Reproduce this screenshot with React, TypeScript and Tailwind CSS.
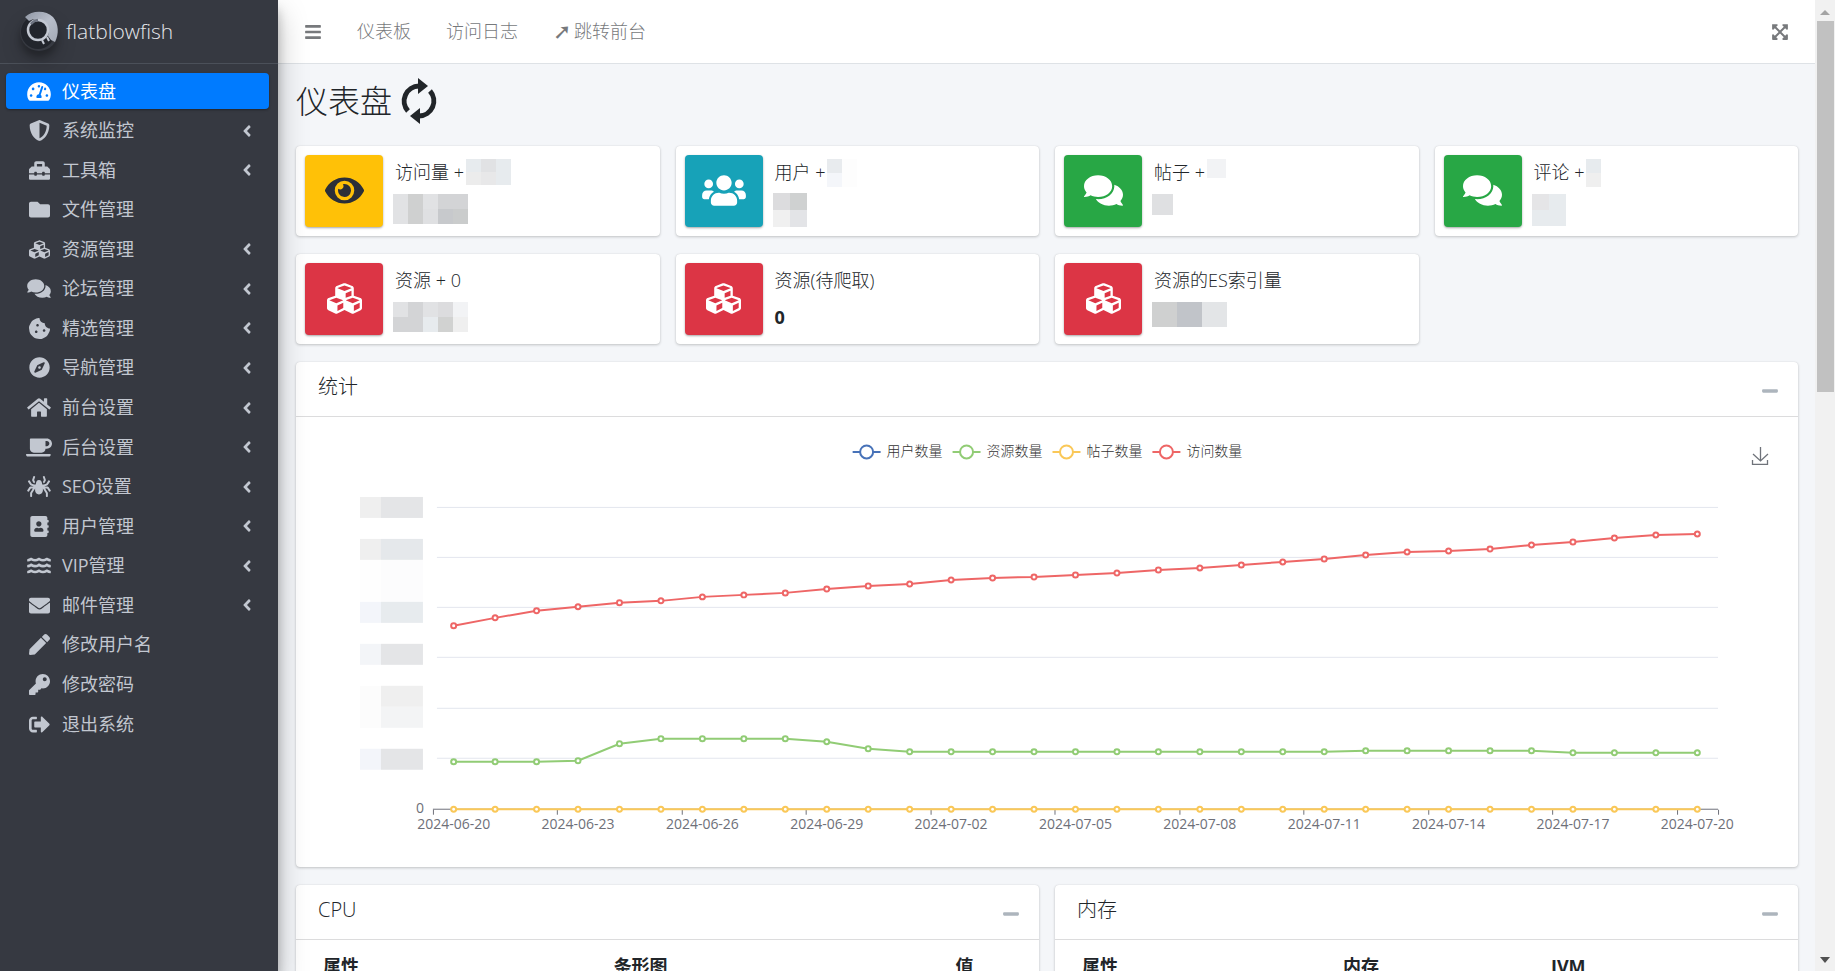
import React from 'react';
import type { IconType } from 'react-icons';
import {
  FaAddressBook,
  FaAngleLeft,
  FaBars,
  FaCoffee,
  FaComments,
  FaCompass,
  FaCookieBite,
  FaCubes,
  FaEnvelope,
  FaExpandArrowsAlt,
  FaEye,
  FaFolder,
  FaHome,
  FaKey,
  FaMinus,
  FaPen,
  FaShieldAlt,
  FaSignOutAlt,
  FaSpider,
  FaTachometerAlt,
  FaToolbox,
  FaUsers,
  FaWater,
} from 'react-icons/fa';

interface MenuItem {
  label: string;
  icon: IconType;
  size?: string;
  active?: boolean;
  children?: boolean;
}

const menu: MenuItem[] = [
  { label: '仪表盘', icon: FaTachometerAlt, size: 'h-[21px] w-6', active: true },
  { label: '系统监控', icon: FaShieldAlt, children: true },
  { label: '工具箱', icon: FaToolbox, children: true },
  { label: '文件管理', icon: FaFolder },
  { label: '资源管理', icon: FaCubes, children: true },
  { label: '论坛管理', icon: FaComments, size: 'h-[21px] w-6', children: true },
  { label: '精选管理', icon: FaCookieBite, children: true },
  { label: '导航管理', icon: FaCompass, children: true },
  { label: '前台设置', icon: FaHome, size: 'h-[21px] w-6', children: true },
  { label: '后台设置', icon: FaCoffee, size: 'h-[21px] w-[26px]', children: true },
  { label: 'SEO设置', icon: FaSpider, size: 'h-[21px] w-6', children: true },
  { label: '用户管理', icon: FaAddressBook, children: true },
  { label: 'VIP管理', icon: FaWater, size: 'h-[21px] w-6', children: true },
  { label: '邮件管理', icon: FaEnvelope, children: true },
  { label: '修改用户名', icon: FaPen },
  { label: '修改密码', icon: FaKey },
  { label: '退出系统', icon: FaSignOutAlt },
];

interface Mask {
  cell: string;
  rows: string[][];
}

interface StatCard {
  label: string;
  icon: IconType;
  size: string;
  color: string;
  value?: string;
  // masked numbers are rows of coloured blocks
  delta?: Mask;
  total?: Mask;
}

const stats: StatCard[] = [
  {
    label: '访问量 +',
    icon: FaEye,
    size: 'h-[35px] w-[39px]',
    color: 'bg-[#ffc107] text-[#2b2f38]',
    delta: { cell: 'w-[15px] h-[13px]', rows: [['#e7ebee', '#e1e2e4', '#e7ebee'], ['#ececec', '#e8e8e9', '#e7ebee']] },
    total: {
      cell: 'w-[15px] h-[15px]',
      rows: [
        ['#e1e2e4', '#cfd0d0', '#e1e2e4', '#d3d4d6', '#d3d4d6'],
        ['#e1e2e4', '#cfd0d0', '#dfe0e2', '#c7c9cc', '#cacccc'],
      ],
    },
  },
  {
    label: '用户 +',
    icon: FaUsers,
    size: 'h-[35px] w-11',
    color: 'bg-[#17a2b8] text-white',
    delta: { cell: 'w-[15px] h-[14px]', rows: [['#e8ebee', '#fdfdfd'], ['#f4f6fa', '#fdfdfd']] },
    total: { cell: 'w-[17px] h-[17px]', rows: [['#dcdcde', '#cfd1d1'], ['#f0f0f0', '#e3e4e7']] },
  },
  {
    label: '帖子 +',
    icon: FaComments,
    size: 'h-[35px] w-[39px]',
    color: 'bg-[#28a745] text-white',
    delta: { cell: 'w-[19px] h-[19px]', rows: [['#f2f3f5']] },
    total: { cell: 'w-[21px] h-[21px]', rows: [['#dfe0e2']] },
  },
  {
    label: '评论 +',
    icon: FaComments,
    size: 'h-[35px] w-[39px]',
    color: 'bg-[#28a745] text-white',
    delta: { cell: 'w-[15px] h-[14px]', rows: [['#e7ebee'], ['#efefef']] },
    total: { cell: 'w-[17px] h-[16px]', rows: [['#e5e5e7', '#e7ebee'], ['#e7ebee', '#e7ebee']] },
  },
  {
    label: '资源 + 0',
    icon: FaCubes,
    size: 'h-[35px] w-[35px]',
    color: 'bg-[#dc3545] text-white',
    total: {
      cell: 'w-[15px] h-[15px]',
      rows: [
        ['#e1e2e4', '#d3d4d6', '#e1e2e4', '#dcdcde', '#f2f3f5'],
        ['#d3d4d6', '#d3d4d6', '#e7ebee', '#d1d2d1', '#efefef'],
      ],
    },
  },
  { label: '资源(待爬取)', icon: FaCubes, size: 'h-[35px] w-[35px]', color: 'bg-[#dc3545] text-white', value: '0' },
  {
    label: '资源的ES索引量',
    icon: FaCubes,
    size: 'h-[35px] w-[35px]',
    color: 'bg-[#dc3545] text-white',
    total: { cell: 'w-[25px] h-[25px]', rows: [['#cfd0d0', '#c1c4c9', '#e3e5e7']] },
  },
];

const MaskBlock: React.FC<{ mask: Mask }> = ({ mask }) => (
  <span className="flex flex-col" aria-hidden="true">
    {mask.rows.map((row, i) => (
      <span key={i} className="flex">
        {row.map((color, j) => (
          <span key={j} className={mask.cell} style={{ backgroundColor: color }} />
        ))}
      </span>
    ))}
  </span>
);

const Logo: React.FC = () => (
  <svg
    width="38"
    height="38"
    viewBox="0 0 38 38"
    className="overflow-visible rounded-full shadow-[0_10px_20px_rgba(0,0,0,0.19),0_6px_6px_rgba(0,0,0,0.23)]"
  >
    <defs>
      <linearGradient id="rim" x1="0" y1="0" x2="1" y2="1">
        <stop offset="0" stopColor="#8f96a4" />
        <stop offset="0.5" stopColor="#b9bfcb" />
        <stop offset="1" stopColor="#a3a9b5" />
      </linearGradient>
    </defs>
    <circle cx="18" cy="19" r="17" fill="#22252c" />
    <path d="M5 4C12-3 26-3 33 4c6 7 6 17 2 25l-4-2-3-4A13 13 0 0 0 9 8z" fill="url(#rim)" />
    <circle cx="18" cy="17" r="10" fill="#22252c" stroke="#c3c8d2" strokeWidth="2.5" />
    <path d="M11 11a10 10 0 0 1 7-4" stroke="#6d7380" strokeWidth="2.500" fill="none" />
    <path d="M22 27l2 4M27 24l2 4" stroke="#c3c8d2" strokeWidth="2" />
  </svg>
);

const Sidebar: React.FC = () => (
  <aside className="relative z-20 w-[278px] shrink-0 bg-[#363941] text-[#c2c7d0] shadow-[0_14px_28px_rgba(0,0,0,0.25),0_10px_10px_rgba(0,0,0,0.22)]">
    <a href="#" className="flex h-16 items-center gap-2 border-b border-[#4b5059] pl-5 text-[21px]">
      <Logo />
      <span className="font-light text-[#e4e6ea]">flatblowfish</span>
    </a>
    <nav className="px-[6px] pt-[9px]">
      <ul className="flex h-[669px] flex-col justify-between">
        {menu.map(({ label, icon: Icon, size, active, children }) => (
          <li key={label}>
            <a
              href="#"
              className={
                active
                  ? 'mr-[3px] flex h-9 items-center rounded bg-[#007bff] pl-[19px] text-white shadow-[0_1px_3px_rgba(0,0,0,0.12),0_1px_2px_rgba(0,0,0,0.24)]'
                  : 'mr-[3px] flex h-9 items-center rounded pl-[19px]'
              }
            >
              <span className="flex w-7 justify-center">
                <Icon className={size ?? 'h-[21px] w-[21px]'} />
              </span>
              <span className="ml-[9px] flex-1">{label}</span>
              {children && <FaAngleLeft className="mr-[13px] h-[18px] w-[18px]" />}
            </a>
          </li>
        ))}
      </ul>
    </nav>
  </aside>
);

const TopBar: React.FC = () => (
  <header className="flex h-16 shrink-0 items-center border-b border-[#dee2e6] bg-white px-[27px] text-[#77797c]">
    <button type="button" aria-label="菜单" className="mr-9">
      <FaBars className="h-[18px] w-[16px]" />
    </button>
    <nav className="flex flex-1 items-center gap-[35px] font-light">
      <a href="#">仪表板</a>
      <a href="#">访问日志</a>
      <a href="#" className="flex items-center gap-[3px]">
        <span className="font-['DejaVu_Sans'] text-[22px]">➚</span>
        <span>跳转前台</span>
      </a>
    </nav>
    <button type="button" aria-label="全屏">
      <FaExpandArrowsAlt className="h-[18px] w-[16px]" />
    </button>
  </header>
);

const InfoBox: React.FC<{ stat: StatCard }> = ({ stat }) => {
  const Icon = stat.icon;
  return (
    <div className="flex h-[90px] rounded-[4px] bg-white p-[9px] shadow-[0_0_1px_rgba(0,0,0,0.125),0_1px_3px_rgba(0,0,0,0.2)]">
      <span
        className={`flex w-[78px] shrink-0 items-center justify-center rounded pb-[2px] shadow-[0_1px_3px_rgba(0,0,0,0.12),0_1px_2px_rgba(0,0,0,0.24)] ${stat.color}`}
      >
        <Icon className={stat.size} />
      </span>
      <div className="flex flex-1 flex-col gap-[5px] pl-[10px]">
        <div className="flex h-[34px] items-start gap-[2px] pt-1 pl-[2px]">
          <span className="leading-[26px]">{stat.label}</span>
          {stat.delta && <MaskBlock mask={stat.delta} />}
        </div>
        <div className="flex items-start">
          {stat.total && <MaskBlock mask={stat.total} />}
          {stat.value && <span className="pl-[2px] leading-[30px] font-bold">{stat.value}</span>}
        </div>
      </div>
    </div>
  );
};

const Card: React.FC<{ title: string; children: React.ReactNode }> = ({ title, children }) => (
  <section className="rounded-[4px] bg-white shadow-[0_0_1px_rgba(0,0,0,0.125),0_1px_3px_rgba(0,0,0,0.2)]">
    <div className="flex h-[55px] items-start justify-between border-b border-[#dcdcdd] pt-3 pr-5 pl-[22px]">
      <h3 className="text-xl leading-[26px]">{title}</h3>
      <button type="button" aria-label="折叠" className="mt-2 text-[#adb5bd]">
        <FaMinus className="h-[18px] w-[16px]" />
      </button>
    </div>
    {children}
  </section>
);

const LEFT = 137;
const BAND = 1286 / 31;
const BASE = 392.5;
const pointX = (i: number) => LEFT + BAND * (i + 0.5);

const visits = [
  209, 201, 194, 190, 186, 184, 180, 178, 176, 172, 169, 167, 163, 161, 160, 158, 156, 153, 151, 148, 145, 142, 138,
  135, 134, 132, 128, 125, 121, 118, 117,
];
const resources = [
  345, 345, 345, 344, 327, 322, 322, 322, 322, 325, 332, 335, 335, 335, 335, 335, 335, 335, 335, 335, 335, 335, 334,
  334, 334, 334, 334, 336, 336, 336, 336,
];
const zeros = visits.map(() => BASE);

const dates = [
  '2024-06-20', '2024-06-23', '2024-06-26', '2024-06-29', '2024-07-02', '2024-07-05',
  '2024-07-08', '2024-07-11', '2024-07-14', '2024-07-17', '2024-07-20',
];

const legend = [
  { name: '用户数量', color: '#4772b8' },
  { name: '资源数量', color: '#91cc75' },
  { name: '帖子数量', color: '#fac858' },
  { name: '访问数量', color: '#ee6666' },
];

// y, height, left colour, right colour
const maskedTicks: [number, number, string, string][] = [
  [80, 21, '#efefef', '#e4e5e7'],
  [122, 21, '#efefef', '#e5e8eb'],
  [143, 42, '#fefefe', '#fcfcfd'],
  [185, 21, '#f3f5fa', '#e7ebee'],
  [227, 21, '#f3f5f8', '#e4e5e7'],
  [269, 21, '#fcfcfc', '#efefef'],
  [290, 21, '#fcfcfc', '#f3f4f5'],
  [332, 21, '#f3f5fa', '#e4e5e7'],
];

const Series: React.FC<{ values: number[]; color: string }> = ({ values, color }) => (
  <g stroke={color} strokeWidth="2">
    <polyline points={values.map((y, i) => `${pointX(i)},${y}`).join(' ')} fill="none" />
    {values.map((y, i) => (
      <circle key={i} cx={pointX(i)} cy={y} r="2.5" fill="#fff" />
    ))}
  </g>
);

const Chart: React.FC = () => (
  <svg viewBox="0 0 1503 450" className="block w-full" role="img" aria-label="统计">
    {legend.map((item, i) => (
      <g key={item.name}>
        <path d={`M${557 + i * 100} 35h28`} stroke={item.color} strokeWidth="2" />
        <circle cx={571 + i * 100} cy="35" r="6.5" fill="#fff" stroke={item.color} strokeWidth="2" />
        <text x={591 + i * 100} y="39" fontSize="14" fill="#333">
          {item.name}
        </text>
      </g>
    ))}

    <g stroke="#6f737a" strokeWidth="1.3" fill="none">
      <path d="M1465.5 30v14M1458 37l7.5 7 7.5-7M1457.5 43v4.500h15v-4.500" />
    </g>

    {[90, 140, 190, 240, 291, 341].map(y => (
      <path key={y} d={`M141 ${y + 0.5}H1423`} stroke="#e3e6ee" />
    ))}
    {maskedTicks.map(([y, h, a, b]) => (
      <g key={y}>
        <rect x="64" y={y} width="21" height={h} fill={a} />
        <rect x="85" y={y} width="42" height={h} fill={b} />
      </g>
    ))}

    <path d="M137 392.500H1423" stroke="#6e7079" />
    {[0, 3, 6, 9, 12, 15, 18, 21, 24, 27, 30, 31].map(n => (
      <path key={n} d={`M${Math.round(LEFT + n * BAND) + 0.5} 393v5`} stroke="#6e7079" />
    ))}
    <g fontSize="14" fill="#6e7079" className="font-normal">
      <text x="128" y="396" textAnchor="end">0</text>
      {dates.map((d, i) => (
        <text key={d} x={pointX(i * 3)} y="412" textAnchor="middle">
          {d}
        </text>
      ))}
    </g>

    <Series values={resources} color="#91cc75" />
    <Series values={zeros} color="#fac858" />
    <Series values={visits} color="#ee6666" />
  </svg>
);

const Scrollbar: React.FC = () => (
  <div className="flex w-5 shrink-0 flex-col items-center bg-[#f1f1f1] py-2" aria-hidden="true">
    <svg width="10" height="6" viewBox="0 0 10 6" className="my-[1px]">
      <path d="M0 6l5-5 5 5z" fill="#a3a3a3" />
    </svg>
    <div className="mt-[5px] h-[371px] w-[17px] bg-[#c1c1c1]" />
    <svg width="10" height="6" viewBox="0 0 10 6" className="mt-auto">
      <path d="M0 0l5 6 5-6z" fill="#505050" />
    </svg>
  </div>
);

const App: React.FC = () => {
  return (
    <div className="flex h-screen overflow-hidden bg-[#f4f6f9] font-['Open_Sans','Noto_Sans_CJK_SC',sans-serif] text-lg leading-[27px] text-[#212529]">
      <Sidebar />
      <div className="flex min-w-0 flex-1 flex-col">
        <TopBar />
        <main className="min-h-0 flex-1 overflow-hidden pr-[17px] pl-[18px] font-light">
          <div className="flex h-[82px] items-center gap-[9px] pb-[9px]">
            <h1 className="text-[32px] leading-[38px]">仪表盘</h1>
            <button type="button" aria-label="刷新">
              <svg width="36" height="46" viewBox="0 0 36 46" fill="none" stroke="#212529" strokeWidth="5">
                <path d="M7 33A15 15 0 0 1 18 8" />
                <path d="M29 13A15 15 0 0 1 18 38" />
                <path d="M17 0l10 8-10 8z" fill="#212529" stroke="none" />
                <path d="M19 46L9 38l10-8z" fill="#212529" stroke="none" />
              </svg>
            </button>
          </div>
          <div className="grid grid-cols-4 gap-x-4 gap-y-[18px]">
            {stats.map(stat => (
              <InfoBox key={stat.label} stat={stat} />
            ))}
          </div>
          <div className="mt-[18px]">
            <Card title="统计">
              <Chart />
            </Card>
          </div>
          <div className="mt-[18px] grid grid-cols-2 gap-4">
            <Card title="CPU">
              <table className="w-full table-fixed text-left">
                <thead>
                  <tr>
                    <th className="w-[41%] py-[13px] pl-[27px]">属性</th>
                    <th className="w-[46%] px-[13px] py-[13px]">条形图</th>
                    <th className="px-[13px] py-[13px]">值</th>
                  </tr>
                </thead>
              </table>
            </Card>
            <Card title="内存">
              <table className="w-full table-fixed text-left">
                <thead>
                  <tr>
                    <th className="w-[37%] py-[13px] pl-[27px]">属性</th>
                    <th className="w-[28%] px-[13px] py-[13px]">内存</th>
                    <th className="px-[13px] py-[13px]">JVM</th>
                  </tr>
                </thead>
              </table>
            </Card>
          </div>
        </main>
      </div>
      <Scrollbar />
    </div>
  );
};

export default App;
